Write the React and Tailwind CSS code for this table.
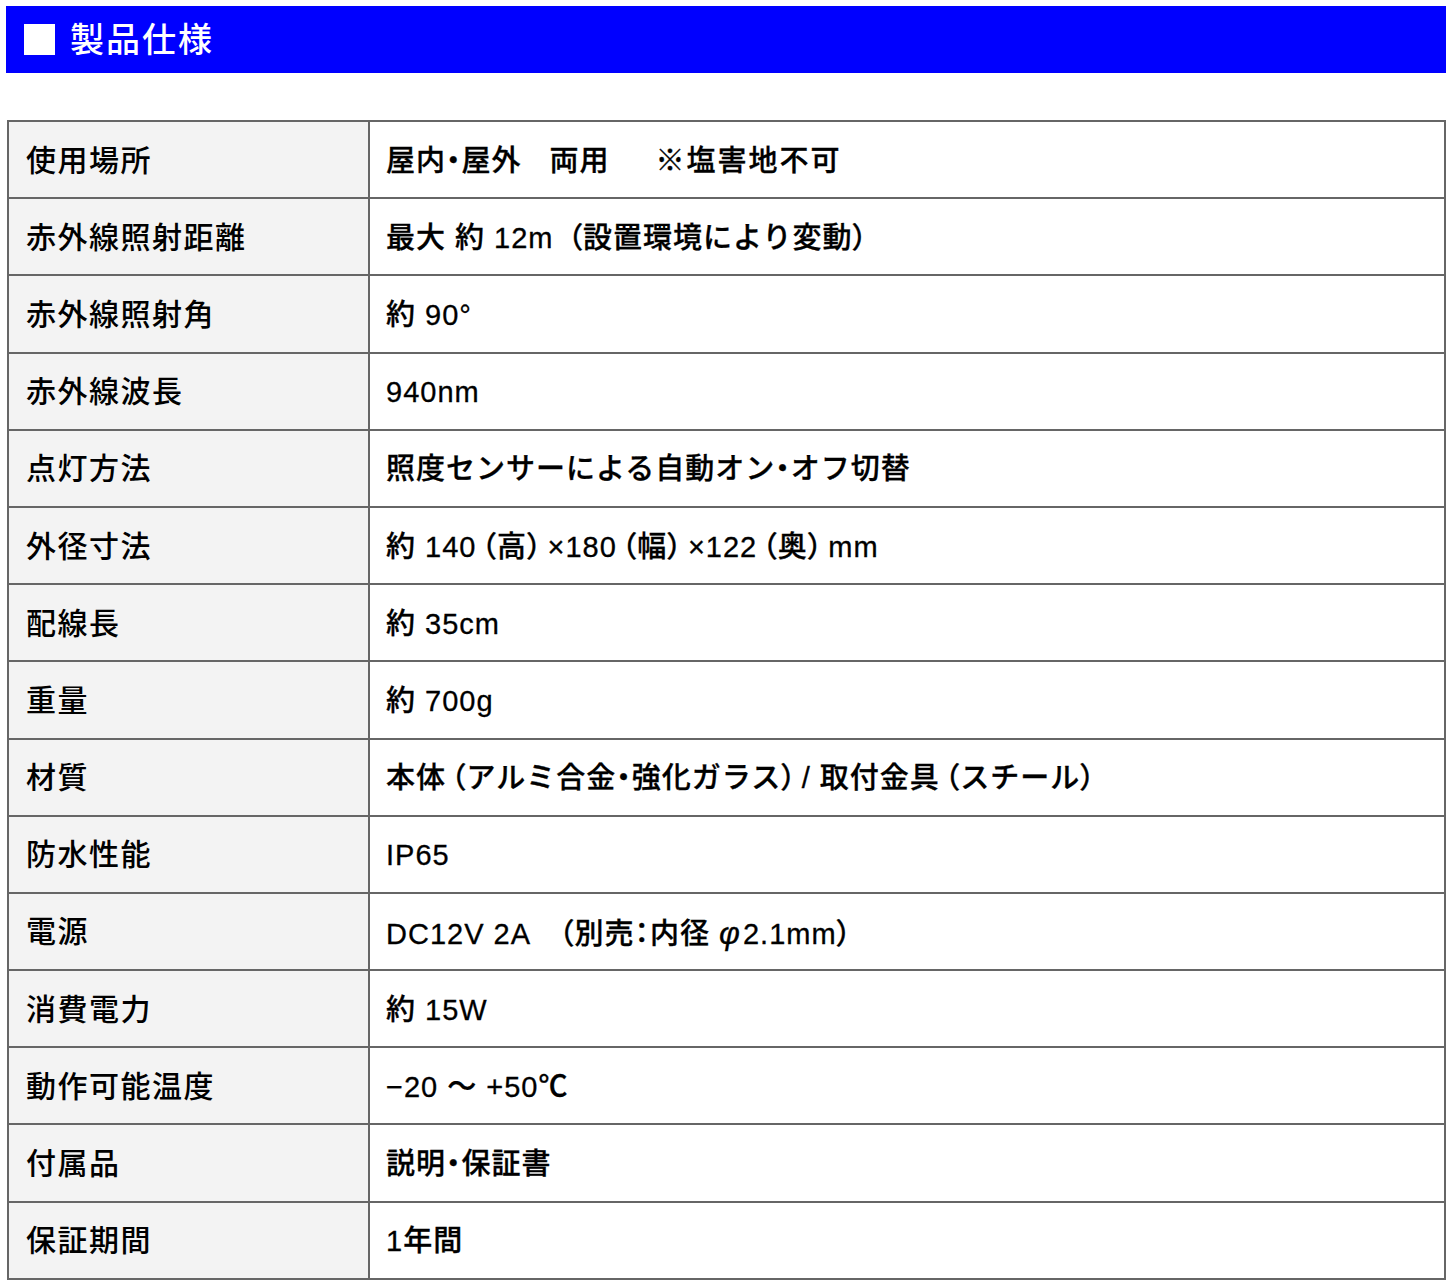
const specs = [
  ['使用場所', null],
  ['赤外線照射距離', '最大 約 12m （設置環境により変動）'],
  ['赤外線照射角', '約 90°'],
  ['赤外線波長', '940nm'],
  ['点灯方法', '照度センサーによる自動オン・オフ切替'],
  ['外径寸法', '約 140（高）×180（幅）×122（奥）mm'],
  ['配線長', '約 35cm'],
  ['重量', '約 700g'],
  ['材質', '本体（アルミ合金・強化ガラス）/ 取付金具（スチール）'],
  ['防水性能', 'IP65'],
  ['電源', 'DC12V 2A \u2002（別売：内径 φ2.1mm）'],
  ['消費電力', '約 15W'],
  ['動作可能温度', '−20 ～ +50℃'],
  ['付属品', '説明・保証書'],
  ['保証期間', '1年間'],
];

// full-width punctuation is drawn proportional, the rest stays full width
function Value({ text }) {
  return text.split(/([（）・：φ])/).map((p, i) => {
    if (p === '（') return <span key={i} className="pl-[5px] [font-feature-settings:'palt']">（</span>;
    if (p === '）') return <span key={i} className="pr-[5px] [font-feature-settings:'palt']">）</span>;
    if (p === '・' || p === '：') return <span key={i} className="[font-feature-settings:'palt']">{p}</span>;
    if (p === 'φ') return <span key={i} className="italic text-[32px] leading-none pr-[2px]">φ</span>;
    return p;
  });
}

export default function App() {
  return (
    <div
      className="w-[1452px] min-h-[1288px] bg-white pt-[6px] text-black"
      style={{ fontFamily: '"Liberation Sans", "Noto Sans CJK JP", sans-serif' }}
    >
      <div className="mx-[6px] h-[67px] bg-[#0000ff] flex items-center pl-[18px] gap-[15px]">
        <div className="w-[31px] h-[31px] bg-white" />
        <h2 className="text-white text-[34px] font-medium leading-none tracking-[2px]">製品仕様</h2>
      </div>

      <table className="mt-[47px] ml-[7px] w-[1439px] border-collapse border-2 border-[#666666]">
        <tbody>
          {specs.map(([label, value]) => (
            <tr key={label} className="h-[77.2px]">
              <td className="w-[361px] bg-[#f3f3f3] border-2 border-[#666666] pl-[17px] pt-[2px] text-[30px] font-medium leading-none tracking-[1.5px]">
                {label}
              </td>
              <td className="bg-white border-2 border-[#666666] pl-[16px] pt-[3px] text-[29px] font-medium leading-none tracking-[1px] [-webkit-text-stroke:0.3px_black]">
                {value === null ? (
                  <>
                    屋内<span className="[font-feature-settings:'palt']">・</span>屋外
                    <span className="inline-block w-[28px]" />
                    両用
                    <span className="inline-block w-[46px]" />
                    <span className="tracking-[2px]">※塩害地不可</span>
                  </>
                ) : (
                  <Value text={value} />
                )}
              </td>
            </tr>
          ))}
        </tbody>
      </table>
    </div>
  );
}
